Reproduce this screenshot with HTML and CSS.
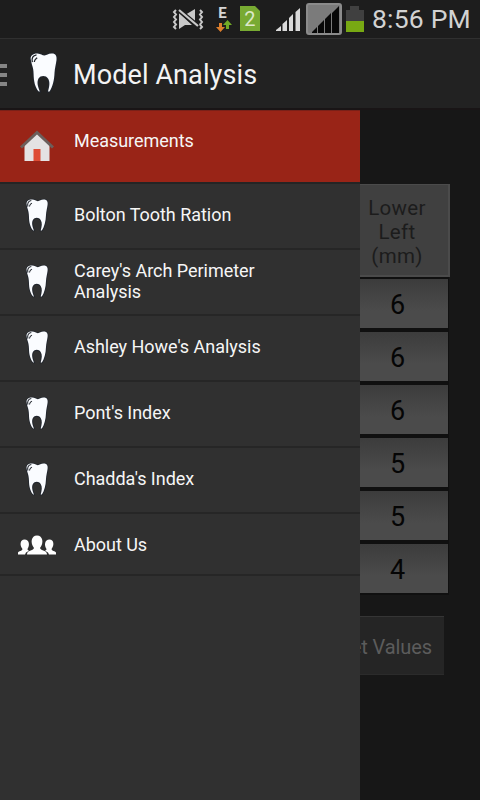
FILE: index.html
```
<!DOCTYPE html>
<html lang="en">
<head>
<meta charset="utf-8">
<title>Model Analysis</title>
<link rel="stylesheet" href="styles.css">
</head>
<body>
<svg class="defs" width="0" height="0">
  <symbol id="tooth" viewBox="0 0 27 39" overflow="visible">
    <path class="tooth-body" d="M.8 6.500C0 3 3 .5 7.500 .6C11 .8 12 2.500 14.500 2.500C17 2.500 18 .6 21.500 .6C25.500 .3 27 3 26.500 7C26 11 24.800 15 24.500 20C24.300 27 22.500 34 19.500 38.500L18 38.500C19.500 33 20.200 29 18 25.500C16 22.200 10.500 22.200 8.500 25.500C6.500 29 8 34 9.800 38.500L8.800 38.500C5 34.500 3.700 28 3.600 21C3.600 14 1.500 12 .8 6.500Z"/>
    <path d="M2.300 9.200C1.300 5 3 2.500 6.500 1.800M4.300 9C4.600 6.200 6 6 7.200 4.800" fill="none" stroke="#20252c" stroke-width="1.300"/>
  </symbol>
</svg>
<header class="status">
  <svg class="status-icons" width="200" height="38" viewBox="0 0 200 38">
    <path fill="none" stroke="#c9c9c9" stroke-width="2" d="M4 10l-2 2 2 2.500-2 2.500 2 2.500-2 2.500 2 2.500-2 2.500 2 2M28 10l2 2-2 2.500 2 2.500-2 2.500 2 2.500-2 2.500 2 2.500-2 2"/>
    <path fill="#c9c9c9" d="M7 13l13 12h-7l-6 4zM13 15l10-6v13z"/>
    <path fill="none" stroke="#1d1d1d" stroke-width="4.500" d="M8 11l18 15"/>
    <path fill="none" stroke="#c9c9c9" stroke-width="2.200" d="M7 10l19 16"/>
    <text class="edge" x="46.300" y="17.500">E</text>
    <path fill="#dc7e2c" d="M47 23h3v4h3l-4.500 5-4.500-5h3z"/>
    <path fill="#72a926" d="M54 29v-4h-3l4.500-5 4.500 5h-3v4z"/>
    <path fill="#78aa32" d="M68 6h15l5 5v20H68z"/>
    <text class="sim" x="72.300" y="26">2</text>
    <g fill="#dadada"><path d="M104 31v-1l5-4v5zM110.500 31v-7l4.500-4v11zM117 31V18l4-4v17zM123.500 31V12l4.500-4v23z"/></g>
    <rect x="135" y="4" width="34" height="30" rx="2" fill="#7b7b7b" stroke="#8b8b8b" stroke-width="2"/>
    <path d="M140 33v-1l5-5v6zM146 33v-7l6-6v13zM153 33V19l6-6v20zM160 33V13l7-7v27z" fill="#080808"/>
    <path fill="#404040" d="M174 10h4V6h9v4h5v11h-18z"/><path fill="#78a913" d="M174 21h18v11h-18z"/>
  </svg>
  <span class="clock">8:56 PM</span>
</header>
<div class="appbar">
  <div class="handle"><i></i><i></i><i></i></div>
  <svg class="logo"><use href="#tooth"/></svg>
  <h1>Model Analysis</h1>
</div>
<main class="content">
  <section class="table">
    <div class="head">Lower<br>Left<br>(mm)</div>
    <div class="cell">6</div>
    <div class="cell">6</div>
    <div class="cell">6</div>
    <div class="cell">5</div>
    <div class="cell">5</div>
    <div class="cell">4</div>
  </section>
  <div class="button">Reset Values</div>
  <nav class="drawer">
    <div class="item active">
      <svg class="home" viewBox="0 0 34 32"><path d="M4.500 14L17 2l12.500 12v17h-25z" fill="#e4e2e3"/><path d="M1 17.500L17 2.500 33 17.500" fill="none" stroke="#6b5f5c" stroke-width="3"/><path d="M13.500 19h7v12h-7z" fill="#de4c35"/></svg>
      <span>Measurements</span>
    </div>
    <div class="item"><svg class="tooth"><use href="#tooth"/></svg><span>Bolton Tooth Ration</span></div>
    <div class="item two-line"><svg class="tooth"><use href="#tooth"/></svg><span>Carey's Arch Perimeter<br>Analysis</span></div>
    <div class="item"><svg class="tooth"><use href="#tooth"/></svg><span>Ashley Howe's Analysis</span></div>
    <div class="item"><svg class="tooth"><use href="#tooth"/></svg><span>Pont's Index</span></div>
    <div class="item"><svg class="tooth"><use href="#tooth"/></svg><span>Chadda's Index</span></div>
    <div class="item about">
      <svg class="people" viewBox="0 0 38 20"><path fill="#fff" d="M0 19.500v-2c1-2 4-1 4.500-3.500C1.500 10.500 2 4.500 6.500 4.500c5 0 5.500 6 3 9.500 0 1 1 1.500 1.500 1.800L8 17.500l-1 2zM38 19.500v-2c-1-2-4-1-4.500-3.500 3-3.500 2.500-9.500-2-9.500-5 0-5.500 6-3 9.500 0 1-1 1.500-1.500 1.800l3 1.700 1 2zM9 19.500c0-4.500 6-3.500 7-6.500C12 8 13 .5 19 .5S26 8 22 13c1 3 7 2 7 6.500z"/></svg>
      <span>About Us</span>
    </div>
  </nav>
</main>
</body>
</html>
```
FILE: styles.css
```
* { box-sizing: border-box; }
body {
  margin: 0;
  width: 480px;
  height: 800px;
  overflow: hidden;
  display: flex;
  flex-direction: column;
  background: #171717;
  font-family: Roboto, sans-serif;
}
.defs { position: absolute; }
.tooth-body {
  fill: #fafcff;
  stroke: #20252d;
  stroke-width: 2px;
  paint-order: stroke;
}
.status {
  height: 38px;
  flex: none;
  display: flex;
  align-items: center;
  padding-left: 172px;
  background: #1d1d1d;
}
.status-icons { flex: none; }
.edge { font: bold 15px Roboto, sans-serif; fill: #d5d5d5; }
.sim { font: 20px Roboto, sans-serif; fill: #dce8c8; }
.clock {
  font-size: 26.500px;
  line-height: 38px;
  letter-spacing: .2px;
  color: #d2d2d2;
  white-space: nowrap;
}
.appbar {
  height: 72px;
  flex: none;
  display: flex;
  align-items: center;
  padding-top: 2px;
  background: #222;
  border-top: 1px solid #303030;
  border-bottom: 2px solid #191516;
}
.handle {
  width: 7px;
  height: 22px;
  display: flex;
  flex-direction: column;
  justify-content: space-between;
}
.handle i { height: 4px; background: #858585; }
.logo { width: 27px; height: 39px; margin: 0 16px 4px 23px; overflow: visible; }
h1 {
  margin: 0;
  font-size: 27px;
  font-weight: 400;
  letter-spacing: .1px;
  color: #f3f3f3;
  white-space: nowrap;
}
.content { position: relative; flex: 1; padding-top: 74px; }
.table { width: 105px; margin-left: 345px; }
.head {
  height: 93px;
  padding-top: 11px;
  background: #404040;
  border: 2px solid #4b4b4b;
  border-width: 1px 2px 2px 1px;
  font-size: 20.500px;
  line-height: 24px;
  letter-spacing: .3px;
  text-align: center;
  color: #1c1c1c;
}
.cell {
  height: 53px;
  margin-right: 1px;
  padding-left: 2px;
  border: solid #101010;
  border-width: 2px 1px 2px 0;
  background: linear-gradient(#3c3c3c, #4b4b4b 65%);
  font-size: 27px;
  line-height: 53px;
  text-align: center;
  color: #050505;
}
.button {
  width: 144px;
  height: 59px;
  margin: 21px 0 0 300px;
  padding-right: 12px;
  border-top: 1px solid #353535;
  border-bottom: 1px solid #2b2b2b;
  background: #252525;
  font-size: 20px;
  line-height: 61px;
  letter-spacing: -.1px;
  text-align: right;
  color: #5c5c5c;
  white-space: nowrap;
}
.drawer {
  position: absolute;
  inset: 0 120px 0 0;
  background: #303030;
}
.item {
  height: 66px;
  display: grid;
  grid-template-columns: 74px 1fr;
  align-items: center;
  border-bottom: 2px solid #262626;
  font-size: 18px;
  line-height: 21px;
  letter-spacing: -.03px;
  color: #f6f6f6;
  white-space: nowrap;
}
.item svg { justify-self: center; }
.item span { margin-top: -4px; }
.item.two-line span { margin-top: -2px; }
.item.active {
  height: 74px;
  background: #992417;
  border-top: 1px solid #7a2018;
  border-bottom-color: #242424;
}
.item.active span { margin-top: -12px; }
.home { width: 34px; height: 32px; margin-top: -2px; }
.tooth { width: 22px; height: 32px; margin-top: -2px; overflow: visible; }
.item.about { height: 62px; padding-top: 2px; }
.item.about span { margin-top: -2px; }
.people { width: 38px; height: 20px; }
```
